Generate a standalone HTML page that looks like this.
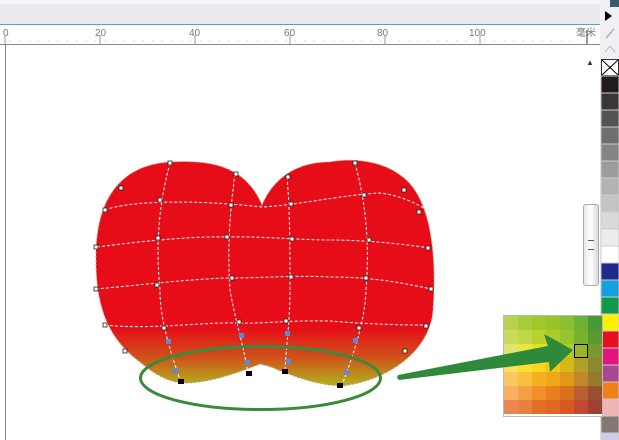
<!DOCTYPE html>
<html><head><style>
body{margin:0;width:619px;height:440px;overflow:hidden;background:#fff;font-family:"Liberation Sans",sans-serif;position:relative}
.a{position:absolute}
</style></head><body>
<div class="a" style="left:0;top:0;width:600px;height:24px;background:#ebe9ee;border-top:4px solid #f6f5f8;box-sizing:border-box"></div>
<div class="a" style="left:0;top:24px;width:600px;height:1px;background:#4aa8d0"></div>
<div class="a" style="left:0;top:25px;width:600px;height:19px;background:#fff;border-bottom:1px solid #888"></div>
<svg class="a" style="left:0;top:25px" width="600" height="20">
<g font-size="10" fill="#777" font-family="Liberation Sans">
<text x="3" y="11">0</text><text x="95" y="11">20</text><text x="189" y="11">40</text><text x="284" y="11">60</text><text x="377" y="11">80</text><text x="469" y="11">100</text><text x="576" y="11">毫米</text></g>
<g stroke="#999">
<line x1="5" y1="10" x2="5" y2="19"/><line x1="100" y1="10" x2="100" y2="19"/><line x1="195" y1="10" x2="195" y2="19"/><line x1="290" y1="10" x2="290" y2="19"/><line x1="385" y1="10" x2="385" y2="19"/><line x1="480" y1="10" x2="480" y2="19"/><line x1="587" y1="5" x2="587" y2="19" stroke="#333"/>
</g>
<g stroke="#bbb" stroke-dasharray="1 8.5"><line x1="9.75" y1="16" x2="580" y2="16"/></g>
</svg>
<div class="a" style="left:5px;top:44px;width:1px;height:396px;background:#888"></div>
<div class="a" style="left:583px;top:204px;width:14px;height:80px;background:linear-gradient(90deg,#e8e8ec,#fff,#d8d8dc);border:1px solid #aaa;border-radius:3px"></div>
<div class="a" style="left:588px;top:240px;width:6px;height:8px;border-top:1px solid #555;border-bottom:1px solid #555"></div>
<div class="a" style="left:586px;top:58px;font-size:8px;color:#333">▲</div>
<div class="a" style="left:600px;top:0;width:19px;height:440px;background:#f0eff3"></div>
<div class="a" style="left:610px;top:0;width:9px;height:7px;background:#3c5a66"></div>
<div class="a" style="left:605px;top:11px;width:0;height:0;border-top:5px solid transparent;border-bottom:5px solid transparent;border-left:7px solid #000"></div>
<svg class="a" style="left:600px;top:0" width="19" height="440">
<line x1="6" y1="38" x2="14" y2="29" stroke="#bbb" stroke-width="2"/>
<polyline points="5,52 10,46 15,52" fill="none" stroke="#bbb"/>
<rect x="1.5" y="59.5" width="17" height="16" fill="#fff" stroke="#333"/>
<line x1="2" y1="60" x2="18" y2="75" stroke="#000"/><line x1="18" y1="60" x2="2" y2="75" stroke="#000"/>
<g stroke="#ccc">
<rect x="1" y="76" width="18" height="17" fill="#231c1c"/>
<rect x="1" y="93" width="18" height="17" fill="#3a3536"/>
<rect x="1" y="110" width="18" height="17" fill="#545254"/>
<rect x="1" y="127" width="18" height="17" fill="#6e6d70"/>
<rect x="1" y="144" width="18" height="17" fill="#858487"/>
<rect x="1" y="161" width="18" height="17" fill="#9c9b9e"/>
<rect x="1" y="178" width="18" height="17" fill="#b3b2b5"/>
<rect x="1" y="195" width="18" height="17" fill="#c4c3c6"/>
<rect x="1" y="212" width="18" height="17" fill="#d9d8db"/>
<rect x="1" y="229" width="18" height="17" fill="#ecebee"/>
<rect x="1" y="246" width="18" height="17" fill="#ffffff"/>
<rect x="1" y="263" width="18" height="17" fill="#1e2a8c"/>
<rect x="1" y="280" width="18" height="17" fill="#12a0e0"/>
<rect x="1" y="297" width="18" height="17" fill="#0e9a4a"/>
<rect x="1" y="314" width="18" height="17" fill="#fff000"/>
<rect x="1" y="331" width="18" height="17" fill="#e6101c"/>
<rect x="1" y="348" width="18" height="17" fill="#e4147c"/>
<rect x="1" y="365" width="18" height="17" fill="#a8488e"/>
<rect x="1" y="382" width="18" height="17" fill="#f08018"/>
<rect x="1" y="399" width="18" height="17" fill="#f0b4b4"/>
<rect x="1" y="416" width="18" height="17" fill="#857670"/>
<rect x="1" y="433" width="18" height="17" fill="#d0cce8"/>
</g></svg>
<svg class="a" style="left:0;top:0" width="600" height="440">
<defs><linearGradient id="g" x1="0" y1="160" x2="0" y2="386" gradientUnits="userSpaceOnUse">
<stop offset="0.74" stop-color="#e60d18"/><stop offset="0.87" stop-color="#d0501a"/><stop offset="1" stop-color="#b0b41c"/></linearGradient></defs>
<path d="M262,205 C245,165 210,160 170,162 C120,165 95,200 96,260 C96,310 110,340 140,362 C155,375 170,383 185,383 C210,383 240,372 260,364 L268,366 C285,372 310,385 342,386 C390,380 430,350 433,310 C437,250 430,195 400,175 C380,160 350,158 330,162 C300,162 275,175 262,205Z" fill="url(#g)" stroke="#c8a080" stroke-width="1" stroke-dasharray="2 2"/>
<g fill="none" stroke="#fff" stroke-dasharray="3 2" stroke-width="1">
<path d="M105,210 C130,200 200,200 262,207 C300,205 340,195 380,193 C400,195 420,205 430,212"/>
<path d="M97,247 C150,240 200,236 227,237 C260,236 300,240 330,240 C370,240 410,245 430,248"/>
<path d="M96,289 C140,285 200,278 232,278 C260,278 300,275 330,277 C380,277 410,285 432,289"/>
<path d="M105,325 C150,330 200,322 238,323 C260,324 290,320 330,321 C380,325 410,325 428,325"/>
<path d="M170,163 C160,200 155,240 160,290 C160,320 170,350 180,380"/>
<path d="M235,174 C230,210 227,250 230,290 C235,320 245,350 248,375"/>
<path d="M287,177 C290,210 290,250 290,290 C290,320 286,350 285,370"/>
<path d="M355,163 C365,200 370,240 366,290 C365,320 355,350 342,385"/>
</g>
<g fill="#fff" stroke="#222" stroke-width="0.8">
<rect x="168" y="161" width="4" height="4"/><rect x="234" y="172" width="4" height="4"/><rect x="286" y="175" width="4" height="4"/><rect x="353" y="161" width="4" height="4"/>
<rect x="119" y="186" width="4" height="4"/><rect x="402" y="188" width="4" height="4"/><rect x="103" y="208" width="4" height="4"/><rect x="417" y="210" width="4" height="4"/>
<rect x="94" y="245" width="4" height="4"/><rect x="426" y="246" width="4" height="4"/><rect x="94" y="287" width="4" height="4"/><rect x="429" y="287" width="4" height="4"/>
<rect x="103" y="323" width="4" height="4"/><rect x="424" y="324" width="4" height="4"/><rect x="123" y="349" width="4" height="4"/><rect x="403" y="349" width="4" height="4"/>
<rect x="158" y="198" width="4" height="4"/><rect x="229" y="203" width="4" height="4"/><rect x="289" y="202" width="4" height="4"/><rect x="362" y="193" width="4" height="4"/>
<rect x="156" y="236" width="4" height="4"/><rect x="225" y="235" width="4" height="4"/><rect x="290" y="237" width="4" height="4"/><rect x="367" y="238" width="4" height="4"/>
<rect x="155" y="283" width="4" height="4"/><rect x="230" y="276" width="4" height="4"/><rect x="289" y="275" width="4" height="4"/><rect x="364" y="276" width="4" height="4"/>
<rect x="162" y="326" width="4" height="4"/><rect x="237" y="320" width="4" height="4"/><rect x="284" y="319" width="4" height="4"/><rect x="357" y="326" width="4" height="4"/>
</g>
<g fill="#5a8ae0"><rect x="166" y="339" width="5" height="5"/><rect x="239" y="333" width="5" height="5"/><rect x="285" y="331" width="5" height="5"/><rect x="353" y="338" width="5" height="5"/>
<rect x="173" y="368" width="5" height="5"/><rect x="245" y="360" width="5" height="5"/><rect x="286" y="359" width="5" height="5"/><rect x="344" y="370" width="5" height="5"/></g>
<g fill="#000"><rect x="178" y="379" width="6" height="5"/><rect x="246" y="371" width="6" height="5"/><rect x="282" y="369" width="6" height="5"/><rect x="337" y="383" width="6" height="5"/></g>
<ellipse cx="260.5" cy="378" rx="120" ry="31.5" fill="none" stroke="#3a8a3c" stroke-width="3"/>
</svg>
<div class="a" style="left:503px;top:315px;width:98px;height:100px;border:1px solid #bbb;background:#fff;display:grid;grid-template-columns:repeat(7,14px);grid-template-rows:repeat(7,14px);overflow:hidden">
<div style="background:#b7d24e"></div><div style="background:#a8cc3a"></div><div style="background:#a0c82a"></div><div style="background:#98c42a"></div><div style="background:#88c030"></div><div style="background:#6eb038"></div><div style="background:#4a9838"></div>
<div style="background:#c8dc5a"></div><div style="background:#c0d848"></div><div style="background:#b8d230"></div><div style="background:#a8cc28"></div><div style="background:#98c430"></div><div style="background:#78b030"></div><div style="background:#5a9830"></div>
<div style="background:#e0e470"></div><div style="background:#e8e840"></div><div style="background:#e4e020"></div><div style="background:#d0d418"></div><div style="background:#b8c820"></div><div style="background:#9cb428;box-shadow:inset 0 0 0 1px #000,inset 0 0 0 3px #9cb428"></div><div style="background:#789830"></div>
<div style="background:#f8e060"></div><div style="background:#f8e030"></div><div style="background:#f8d820"></div><div style="background:#f0c818"></div><div style="background:#d8b818"></div><div style="background:#b0a028"></div><div style="background:#8c8830"></div>
<div style="background:#f8c860"></div><div style="background:#f8c040"></div><div style="background:#f4b020"></div><div style="background:#f0a818"></div><div style="background:#e09818"></div><div style="background:#c08828"></div><div style="background:#987830"></div>
<div style="background:#f8b060"></div><div style="background:#f4a040"></div><div style="background:#f09028"></div><div style="background:#e88020"></div><div style="background:#d87020"></div><div style="background:#b86030"></div><div style="background:#9a5030"></div>
<div style="background:#e88850"></div><div style="background:#e88040"></div><div style="background:#e07028"></div><div style="background:#e06820"></div><div style="background:#d85820"></div><div style="background:#c04a30"></div><div style="background:#a04030"></div>
</div>
<svg class="a" style="left:0;top:0" width="600" height="440">
<polygon points="397,378 398,375 548,346 544,334 573,350 550,372 549,362 399,380" fill="#2e8a3a"/>
</svg>
</body></html>
